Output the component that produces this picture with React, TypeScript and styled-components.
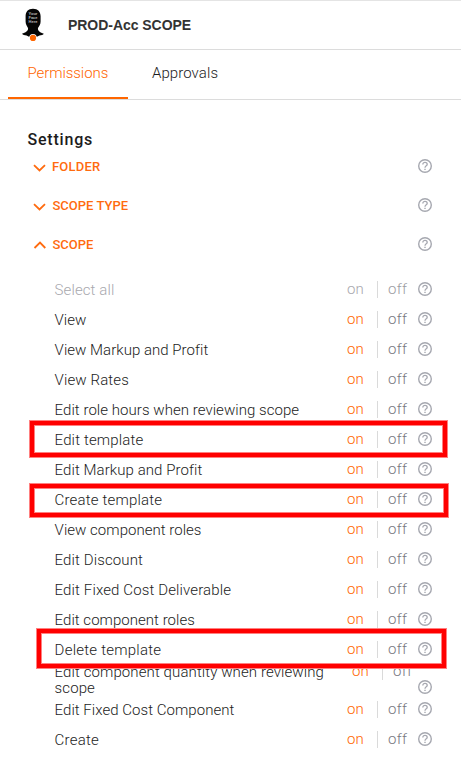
import React from "react";
import styled, { createGlobalStyle } from "styled-components";

const GlobalStyle = createGlobalStyle`
  * { box-sizing: border-box; }
  body { margin: 0; background: #fff; overflow: hidden; }
`;

const Page = styled.main`
  position: relative;
  width: 461px;
  height: 757px;
  overflow: hidden;
  background: #fff;
  color: #1c1c1c;
  font-family: Roboto, "Liberation Sans", sans-serif;
  font-weight: 300;
  font-size: 15px;
`;

const Header = styled.header`
  display: flex;
  align-items: center;
  height: 50px;
  padding-left: 20px;
  border-top: 1px solid #e4e4e4;
  border-bottom: 1px solid #dcdcdc;
`;

const Title = styled.h1`
  margin: 0 0 0 22px;
  font: 700 14px/20px "Liberation Sans", Arial, sans-serif;
  letter-spacing: -0.04px;
  color: #333;
`;

const Tabs = styled.nav`
  display: flex;
  height: 50px;
  padding-left: 8px;
  border-bottom: 1px solid #dcdcdc;
`;

const Tab = styled.a<{ $active?: boolean; $track: number }>`
  height: 49px;
  width: ${(p) => (p.$active ? 120 : 114)}px;
  padding-left: ${(p) => (p.$active ? 19.5 : 24)}px;
  border-bottom: ${(p) => (p.$active ? "2px solid #ff6600" : "none")};
  color: ${(p) => (p.$active ? "#ff6600" : "#1c1c1c")};
  line-height: 46px;
  letter-spacing: ${(p) => p.$track}px;
`;

const SettingsTitle = styled.h2`
  margin: 30px 0 0 27.5px;
  font-size: 16px;
  font-weight: 500;
  line-height: 20px;
  height: 17px;
  letter-spacing: 0.8px;
`;

const SectionRow = styled.div`
  display: flex;
  align-items: center;
  height: 39px;
  padding: 0 29px 0 33px;
  color: #ff6b0f;
`;

const SectionList = styled.div`
  height: 127px;
`;

const SectionName = styled.span<{ $track: number; $gap: number }>`
  flex: 1;
  margin-left: ${(p) => p.$gap}px;
  font-size: 13px;
  font-weight: 500;
  letter-spacing: ${(p) => p.$track}px;
`;

const PermissionRow = styled.div`
  display: flex;
  align-items: center;
  height: 30px;
  padding: 0 29px 0 54.6px;
`;

const Label = styled.span<{ $track: number; $muted?: boolean }>`
  flex: 1;
  line-height: 16px;
  padding-top: 1px;
  white-space: pre;
  letter-spacing: ${(p) => p.$track}px;
  color: ${(p) => (p.$muted ? "#a8a8ae" : "#1c1c1c")};
`;

const Toggle = styled.div<{ $shifted?: boolean }>`
  display: flex;
  align-items: center;
  height: 17px;
  width: 71px;
  margin-right: ${(p) => (p.$shifted ? -5 : 0)}px;
  transform: ${(p) => (p.$shifted ? "translateY(-8px)" : "none")};
`;

const On = styled.span<{ $muted?: boolean }>`
  width: 31px;
  height: 17px;
  line-height: 17px;
  border-right: 1px solid #dadada;
  color: ${(p) => (p.$muted ? "#a8a8ae" : "#ff6600")};
`;

const Off = styled.span<{ $muted?: boolean }>`
  margin-left: 10px;
  line-height: 17px;
  letter-spacing: 0.3px;
  color: ${(p) => (p.$muted ? "#9c9ca2" : "#777780")};
`;

const HelpSvg = styled.svg<{ $dy: number }>`
  flex: none;
  display: block;
  transform: translateY(${(p) => p.$dy}px);
`;

const Highlight = styled.div<{ $x: number; $y: number; $w: number; $h: number }>`
  position: absolute;
  left: ${(p) => p.$x}px;
  top: ${(p) => p.$y}px;
  width: ${(p) => p.$w}px;
  height: ${(p) => p.$h}px;
  border: 4px solid #ff0000;
  box-shadow: 0 0 0 1px #ff8080, inset 0 0 0 1px #ff8080;
`;

const Help = ({ dy = 0 }: { dy?: number }) => (
  <HelpSvg $dy={dy} width="14" height="14" viewBox="0 0 14 14" fill="none" stroke="#a6a8b0">
    <circle cx="7" cy="7" r="6.3" strokeWidth="1.4" />
    <path d="M4.8 5.5C4.8 4.2 5.8 3.4 7 3.4s2.2.8 2.2 2C9.2 6.8 7 6.8 7 8.7" strokeWidth="1.3" />
    <path d="M7 9.7v1.4" strokeWidth="1.4" />
  </HelpSvg>
);

const Chevron = ({ up }: { up?: boolean }) => (
  <svg width="13" height="13" viewBox="0 0 13 13" fill="none" stroke="#ff6b0f" strokeWidth="1.8">
    <path d={up ? "M1.5 10L7 4.6L12.3 10" : "M1 5.2L6.5 10.5L12 5.2"} />
  </svg>
);

const Avatar = () => (
  <svg width="26" height="34" viewBox="0 0 26 34">
    <path
      d="M13 .8C8 .8 5.6 3.8 5.6 8.3v5.2c0 2.8 1.3 4.6 2.4 6.6.6 3-2.6 4.6-6 5.7.9 1 2.6 1.5 4.6 1.7L9 28.8h8l2.4-1.3c2-.2 3.7-.7 4.4-1.7-3.4-1.1-6.4-2.7-5.8-5.7 1.3-2 2.6-3.8 2.6-6.6V8.3C20.6 3.8 18 .8 13 .8z"
      fill="#050505"
    />
    <g fill="#b8b8b8" fontFamily="Liberation Sans, sans-serif" fontWeight="700" fontSize="4" textAnchor="middle">
      <text x="13" y="7.2">Your</text>
      <text x="13" y="11.2">Face</text>
      <text x="13" y="15.2">Here</text>
    </g>
    <circle cx="13" cy="29.9" r="3.8" fill="#fff" />
    <circle cx="13" cy="29.9" r="3.1" fill="#ff6600" />
  </svg>
);

const sections = [
  { name: "FOLDER", track: 0.2, gap: 6, up: false },
  { name: "SCOPE TYPE", track: 0.02, gap: 6.4, up: false },
  { name: "SCOPE", track: 0, gap: 6.4, up: true },
];

const permissions = [
  { label: "Select all", track: 0.1, muted: true },
  { label: "View", track: 0 },
  { label: "View Markup and Profit", track: 0.03 },
  { label: "View Rates", track: 0.12 },
  { label: "Edit role hours when reviewing scope", track: 0.05 },
  { label: "Edit template", track: 0.15 },
  { label: "Edit Markup and Profit", track: 0.07 },
  { label: "Create template", track: 0.18 },
  { label: "View component roles", track: 0.03 },
  { label: "Edit Discount", track: 0.12 },
  { label: "Edit Fixed Cost Deliverable", track: 0.13 },
  { label: "Edit component roles", track: 0.04 },
  { label: "Delete template", track: 0.23 },
  { label: "Edit component quantity when reviewing\nscope", track: 0.1, wrapped: true },
  { label: "Edit Fixed Cost Component", track: 0.04 },
  { label: "Create", track: 0.25 },
];

export default function App() {
  return (
    <Page>
      <GlobalStyle />
      <Header>
        <Avatar />
        <Title>PROD-Acc SCOPE</Title>
      </Header>
      <Tabs>
        <Tab $active $track={-0.07}>Permissions</Tab>
        <Tab $track={0.08}>Approvals</Tab>
      </Tabs>
      <SettingsTitle>Settings</SettingsTitle>
      <SectionList>
        {sections.map((s) => (
          <SectionRow key={s.name}>
            <Chevron up={s.up} />
            <SectionName $track={s.track} $gap={s.gap}>{s.name}</SectionName>
            <Help dy={-1} />
          </SectionRow>
        ))}
      </SectionList>
      {permissions.map((p) => (
        <PermissionRow key={p.label}>
          <Label $track={p.track} $muted={p.muted}>{p.label}</Label>
          <Toggle $shifted={p.wrapped}>
            <On $muted={p.muted}>on</On>
            <Off $muted={p.muted}>off</Off>
          </Toggle>
          <Help dy={p.wrapped ? 8 : 0} />
        </PermissionRow>
      ))}
      <Highlight $x={30} $y={421} $w={417} $h={36} />
      <Highlight $x={30} $y={484} $w={418} $h={33} />
      <Highlight $x={37} $y={629} $w={409} $h={39} />
    </Page>
  );
}
